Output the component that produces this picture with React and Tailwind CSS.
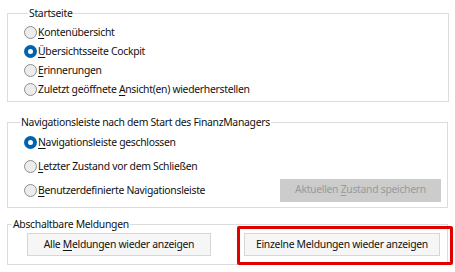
import React from "react";

function Radio({ checked }) {
  if (checked) {
    return (
      <span className="flex h-[13px] w-[13px] shrink-0 items-center justify-center rounded-full bg-[#0063b1]">
        <span className="h-[5px] w-[5px] rounded-full bg-white" />
      </span>
    );
  }
  return (
    <span className="h-[13px] w-[13px] shrink-0 rounded-full border border-[#8f8f8f] bg-[#ececec]" />
  );
}

function Row({ checked, children, h = "h-[19px]" }) {
  return (
    <div className={`flex ${h} items-center gap-[1px]`}>
      <Radio checked={checked} />
      <span className="whitespace-nowrap leading-none">{children}</span>
    </div>
  );
}

function U({ children }) {
  return <span className="underline underline-offset-[2px]">{children}</span>;
}

export default function App() {
  return (
    <div
      className="relative h-[272px] w-[455px] overflow-hidden bg-white px-[7px] text-[10.4px] tracking-[-0.3px] text-[#111]"
      style={{ fontFamily: '"Noto Sans", sans-serif' }}
    >
      <fieldset className="mt-[5px] w-[442px] border border-[#dcdcdc] pb-[2px] pl-[16px] pt-[2px]">
        <legend className="ml-[4px] px-[1px] leading-[16px]">Startseite</legend>
        <Row>
          <U>K</U>ontenübersicht
        </Row>
        <Row checked>
          <U>Ü</U>bersichtsseite Cockpit
        </Row>
        <Row>
          <U>E</U>rinnerungen
        </Row>
        <Row>
          Zuletzt geöffnete <U>A</U>nsicht(en) wiederherstellen
        </Row>
      </fieldset>

      <fieldset className="mt-[12px] w-[441px] border border-[#dcdcdc] pb-[5px] pl-[16px] pr-[6px] pt-0">
        <legend className="ml-[-4px] px-[1px] leading-[16px]">
          Navigationsleiste nach dem Start des FinanzManagers
        </legend>
        <Row h="h-[24px]" checked>
          <U>N</U>avigationsleiste geschlossen
        </Row>
        <Row h="h-[24px]">
          <U>L</U>etzter Zustand vor dem Schließen
        </Row>
        <div className="flex h-[24px] items-center justify-between">
          <div className="flex items-center gap-[1px]">
            <Radio />
            <span className="whitespace-nowrap leading-none">
              <U>B</U>enutzerdefinierte Navigationsleiste
            </span>
          </div>
          <div className="flex h-[23px] w-[161px] items-center justify-center bg-[#cccccc] text-[#9a9a9a]">
            <span className="whitespace-nowrap">
              Aktuellen <U>Z</U>ustand speichern
            </span>
          </div>
        </div>
      </fieldset>

      <fieldset className="mt-[8px] w-[441px] border border-[#dcdcdc] pb-[8px] pt-[1px]">
        <legend className="ml-[4px] px-[1px] leading-[16px]">Abschaltbare Meldungen</legend>
        <div className="flex items-center">
          <div className="ml-[19px] flex h-[23px] w-[184px] items-center justify-center border border-[#d6d6d6] bg-[#f6f6f6]">
            <span className="whitespace-nowrap">
              Alle <U>M</U>eldungen wieder anzeigen
            </span>
          </div>
          <div className="ml-[33px] flex h-[23px] w-[196px] items-center justify-center border border-[#d6d6d6] bg-[#f6f6f6]">
            <span className="whitespace-nowrap">Einzelne Meldungen wieder anzeigen</span>
          </div>
        </div>
      </fieldset>

      <div className="absolute left-[237px] top-[226px] h-[39px] w-[216px] rounded-[2px] border-[3px] border-[#e00000]" />
    </div>
  );
}
